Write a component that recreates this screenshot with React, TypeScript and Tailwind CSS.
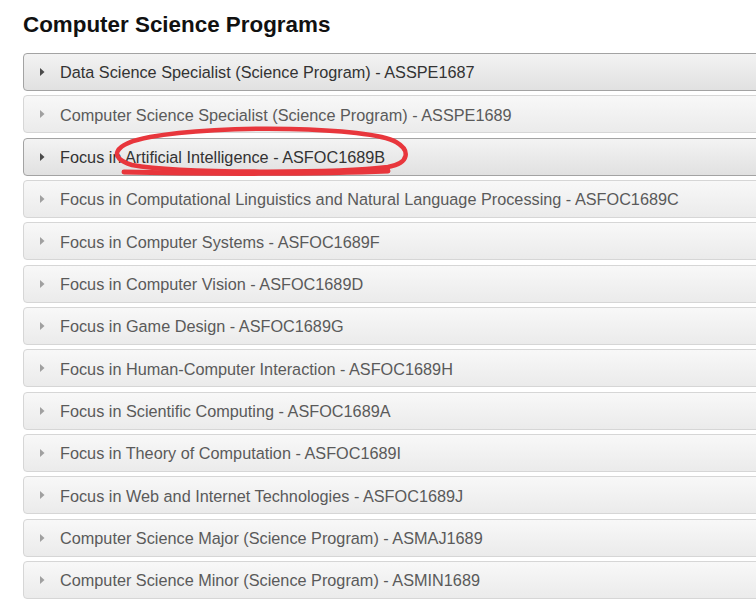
import React from "react";

const rows: { text: string; dark: boolean }[] = [
  { text: "Data Science Specialist (Science Program) - ASSPE1687", dark: true },
  { text: "Computer Science Specialist (Science Program) - ASSPE1689", dark: false },
  { text: "Focus in Artificial Intelligence - ASFOC1689B", dark: true },
  { text: "Focus in Computational Linguistics and Natural Language Processing - ASFOC1689C", dark: false },
  { text: "Focus in Computer Systems - ASFOC1689F", dark: false },
  { text: "Focus in Computer Vision - ASFOC1689D", dark: false },
  { text: "Focus in Game Design - ASFOC1689G", dark: false },
  { text: "Focus in Human-Computer Interaction - ASFOC1689H", dark: false },
  { text: "Focus in Scientific Computing - ASFOC1689A", dark: false },
  { text: "Focus in Theory of Computation - ASFOC1689I", dark: false },
  { text: "Focus in Web and Internet Technologies - ASFOC1689J", dark: false },
  { text: "Computer Science Major (Science Program) - ASMAJ1689", dark: false },
  { text: "Computer Science Minor (Science Program) - ASMIN1689", dark: false },
];

function Row({ text, dark }: { text: string; dark: boolean }) {
  return (
    <div
      className={
        "flex h-[38px] w-[745px] shrink-0 items-center rounded-[4px] border pl-[16px] " +
        (dark
          ? "border-[#a3a3a3] bg-gradient-to-b from-[#f3f3f3] to-[#e1e1e1] text-[#333333]"
          : "border-[#d6d6d6] bg-gradient-to-b from-[#f8f8f8] to-[#ebebeb] text-[#5a5a5a]")
      }
    >
      <svg width="5" height="8" viewBox="0 0 5 8" className="shrink-0">
        <path d="M0 0 L4.5 4 L0 8 Z" fill={dark ? "#4a4a4a" : "#a0a0a0"} />
      </svg>
      <span className="ml-[15px] mt-[1px] whitespace-nowrap text-[16.25px] leading-none">{text}</span>
    </div>
  );
}

export default function App() {
  return (
    <div
      className="relative h-[615px] w-[756px] overflow-hidden bg-white pl-[23px] pt-[14px]"
      style={{ fontFamily: '"Liberation Sans", Arial, sans-serif' }}
    >
      <h1 className="text-[22.4px] font-bold leading-[22px] text-[#111111]">Computer Science Programs</h1>
      <div className="mt-[17px] flex flex-col gap-[4.33px]">
        {rows.map((r) => (
          <Row key={r.text} text={r.text} dark={r.dark} />
        ))}
      </div>
      <svg
        className="pointer-events-none absolute left-0 top-0"
        width="756"
        height="615"
        viewBox="0 0 756 615"
      >
        <path
          d="M396 142 C370 127, 220 124, 150 137 C112 144, 108 158, 132 165 C180 174, 340 173, 388 167 C410 163, 410 150, 396 142"
          fill="none"
          stroke="#e8363c"
          strokeWidth="4.5"
          strokeLinecap="round"
        />
        <path d="M124 172 C200 174, 320 174, 388 171" fill="none" stroke="#e8363c" strokeWidth="5" strokeLinecap="round" />
      </svg>
    </div>
  );
}
